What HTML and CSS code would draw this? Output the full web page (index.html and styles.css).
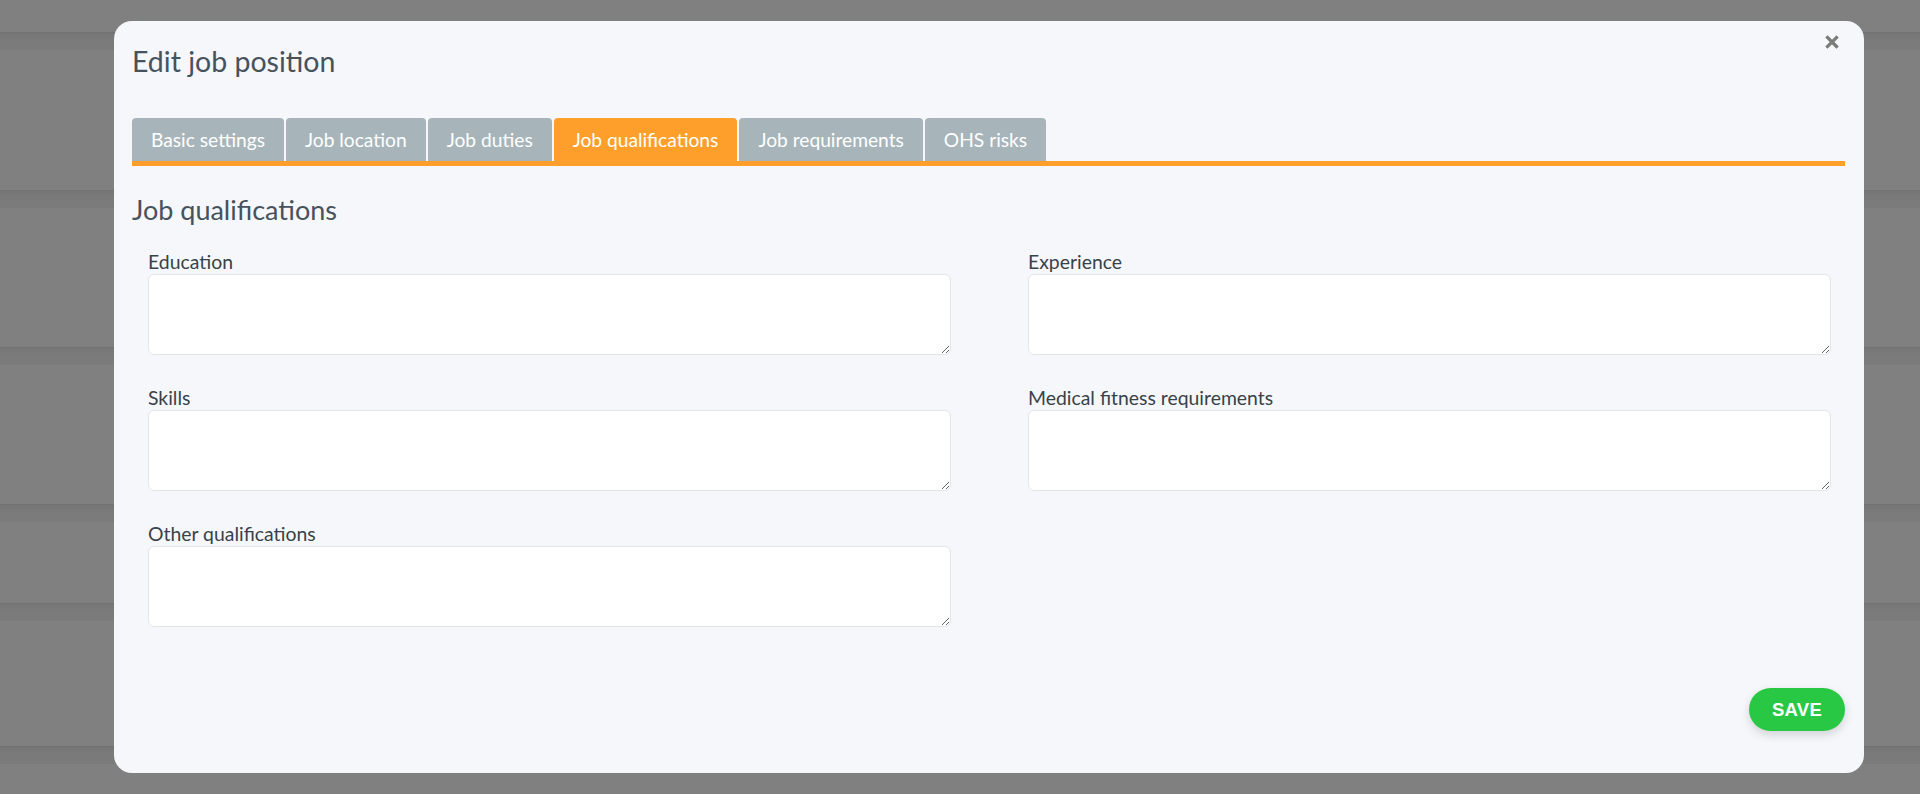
FILE: index.html
```html
<!DOCTYPE html>
<html lang="en">
<head>
    <meta charset="UTF-8">
    <meta name="viewport" content="width=device-width, initial-scale=1.0">
    <title>Edit job position</title>
    <link rel="stylesheet" href="styles.css">
</head>
<body>

<div class="backdrop">
    <div class="page-row" style="height: 32px"></div>
    <div class="row-sep"></div>
    <div class="page-row" style="height: 140px"></div>
    <div class="row-sep"></div>
    <div class="page-row" style="height: 139px"></div>
    <div class="row-sep"></div>
    <div class="page-row" style="height: 139px"></div>
    <div class="row-sep"></div>
    <div class="page-row" style="height: 81px"></div>
    <div class="row-sep"></div>
    <div class="page-row" style="height: 125px"></div>
    <div class="row-sep"></div>
</div>

<div class="modal">
    <button class="close-button" type="button" title="Close">
        <svg width="14" height="14" viewBox="0 0 14 14">
            <path d="M2.5 2.5 L11.5 11.5 M11.5 2.5 L2.5 11.5" stroke="#7b7b7b" stroke-width="3.2" stroke-linecap="square"/>
        </svg>
    </button>

    <h1>Edit job position</h1>

    <div class="tabs">
        <button class="tab" type="button">Basic settings</button>
        <button class="tab" type="button">Job location</button>
        <button class="tab" type="button">Job duties</button>
        <button class="tab active" type="button">Job qualifications</button>
        <button class="tab" type="button">Job requirements</button>
        <button class="tab" type="button">OHS risks</button>
    </div>

    <h2>Job qualifications</h2>

    <form class="form-grid" id="qualificationsForm">
        <div class="field">
            <label for="education">Education</label>
            <textarea id="education" name="education"></textarea>
        </div>
        <div class="field">
            <label for="experience">Experience</label>
            <textarea id="experience" name="experience"></textarea>
        </div>
        <div class="field">
            <label for="skills">Skills</label>
            <textarea id="skills" name="skills"></textarea>
        </div>
        <div class="field">
            <label for="medical">Medical fitness requirements</label>
            <textarea id="medical" name="medical"></textarea>
        </div>
        <div class="field">
            <label for="other">Other qualifications</label>
            <textarea id="other" name="other"></textarea>
        </div>
    </form>

    <div class="modal-footer">
        <button class="save-button" type="submit" form="qualificationsForm">SAVE</button>
    </div>
</div>

</body>
</html>
```

FILE: styles.css
```css
html, body {
    margin: 0;
    padding: 0;
    height: 100%;
}

body {
    font-family: Lato, "Open Sans", sans-serif;
    background-color: #808080;
    overflow: hidden;
}

.backdrop {
    display: flex;
    flex-direction: column;
}

.row-sep {
    height: 18px;
    box-sizing: border-box;
    border-top: 1px solid #727272;
    background: linear-gradient(#767676, #7a7a7a 40%, #7b7b7b);
}

.modal {
    position: absolute;
    left: 114px;
    top: 21px;
    width: 1750px;
    height: 752px;
    box-sizing: border-box;
    padding: 23px 19px 42px 18px;
    background: #f6f7fb;
    border-radius: 18px;
    display: flex;
    flex-direction: column;
}

.close-button {
    position: absolute;
    top: 7px;
    right: 18px;
    width: 28px;
    height: 28px;
    padding: 7px;
    border: none;
    background: none;
    cursor: pointer;
}

.close-button svg {
    display: block;
}

h1 {
    margin: 0;
    font-size: 28.5px;
    line-height: 34px;
    font-weight: 400;
    color: #46525c;
}

.tabs {
    display: flex;
    gap: 2px;
    margin-top: 40px;
    border-bottom: 5px solid #ff9f2b;
}

.tab {
    height: 43px;
    padding: 0 19px;
    border: none;
    border-radius: 4px 4px 0 0;
    background-color: #a7b5ba;
    color: #fff;
    font-family: inherit;
    font-size: 19.2px;
    cursor: pointer;
}

.tab.active {
    background-color: #ff9f2b;
}

h2 {
    margin: 28px 0 24px;
    font-size: 27px;
    line-height: 32px;
    font-weight: 400;
    color: #46525c;
}

.form-grid {
    display: grid;
    grid-template-columns: 1fr 1fr;
    column-gap: 77px;
    row-gap: 31px;
    padding: 0 14px 0 16px;
}

.field label {
    display: block;
    margin-bottom: 1px;
    font-size: 19.4px;
    line-height: 23px;
    color: #384249;
}

.field textarea {
    display: block;
    width: 100%;
    height: 81px;
    box-sizing: border-box;
    padding: 8px 10px;
    border: 1px solid #e2e5ea;
    border-radius: 6px;
    background: #fff;
    font-family: inherit;
    font-size: 16px;
}

.modal-footer {
    margin-top: auto;
    display: flex;
    justify-content: flex-end;
}

.save-button {
    width: 96px;
    height: 43px;
    border: none;
    border-radius: 22px;
    background-color: #28c845;
    color: #fff;
    font-family: "Liberation Sans", Arial, sans-serif;
    font-weight: 700;
    font-size: 18.5px;
    letter-spacing: 0.3px;
    box-shadow: 0 4px 10px rgba(0, 0, 0, 0.15);
    cursor: pointer;
}
```
